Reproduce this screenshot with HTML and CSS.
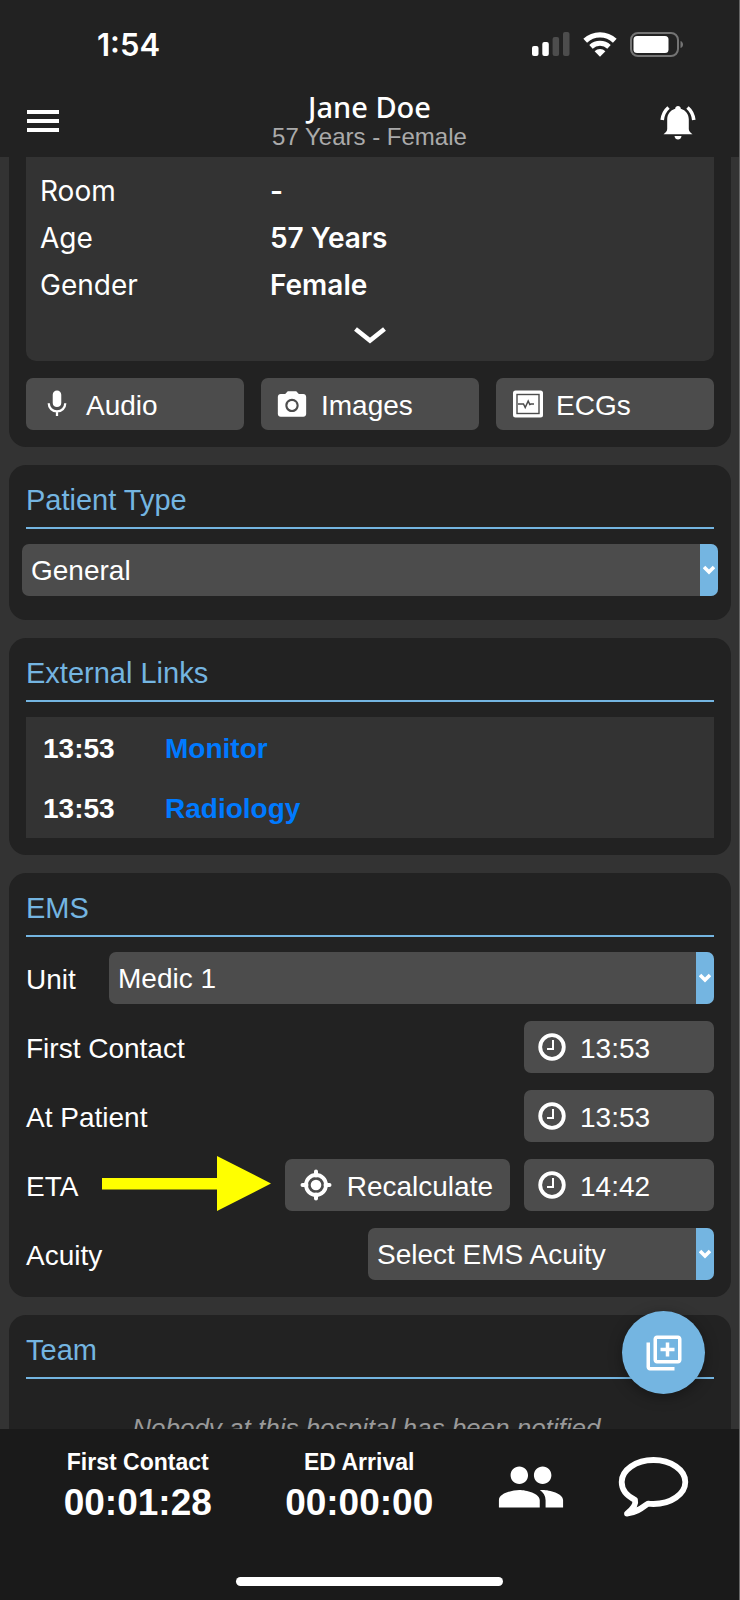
FILE: index.html
```html
<!DOCTYPE html>
<html lang="en">
<head>
    <meta charset="UTF-8">
    <meta name="viewport" content="width=device-width, initial-scale=1.0">
    <title>Jane Doe</title>
    <link rel="stylesheet" href="styles.css">
</head>
<body>
    <header class="header">
        <div class="status-bar">
            <span class="clock">1:54</span>
            <div class="status-icons">
                <svg width="38" height="24" viewBox="0 0 38 24">
                    <rect x="0" y="14" width="6.5" height="10" rx="2" fill="#fff"/>
                    <rect x="10.3" y="10" width="6.5" height="14" rx="2" fill="#fff"/>
                    <rect x="20.6" y="5" width="6.5" height="19" rx="2" fill="#4d4d4d"/>
                    <rect x="31" y="0" width="6.5" height="24" rx="2" fill="#4d4d4d"/>
                </svg>
                <svg width="34" height="25" viewBox="0 0 34 25">
                    <path d="M2.2 8.8a21.5 21.5 0 0 1 29.6 0" fill="none" stroke="#fff" stroke-width="5.4"/>
                    <path d="M8 14.8a13.2 13.2 0 0 1 18 0" fill="none" stroke="#fff" stroke-width="5"/>
                    <path d="M11.6 19.2a8 8 0 0 1 10.8 0L17 24.8z" fill="#fff"/>
                </svg>
                <svg width="54" height="25" viewBox="0 0 54 25">
                    <rect x="1" y="1" width="47" height="23" rx="7" fill="none" stroke="#747474" stroke-width="2"/>
                    <rect x="3.5" y="4" width="35" height="17" rx="3.5" fill="#fff"/>
                    <path d="M50.5 9c3.4 1 3.4 6 0 7z" fill="#747474"/>
                </svg>
            </div>
        </div>
        <div class="nav-bar">
            <button class="icon-btn" aria-label="Menu">
                <svg width="32" height="24" viewBox="0 0 32 24">
                    <path d="M0 3h32M0 12h32M0 21h32" stroke="#fff" stroke-width="4"/>
                </svg>
            </button>
            <div class="patient">
                <h1>Jane Doe</h1>
                <p>57 Years - Female</p>
            </div>
            <button class="icon-btn" aria-label="Alerts">
                <svg width="36" height="40" viewBox="0 -4 36 40" fill="#fff">
                    <path d="M18 1c1.600 0 2.700 1 2.800 2.700 5 1.400 8 5.600 8 10.800v9.500c0 2 1.500 3.500 3.700 5.300H3.500C5.700 27.500 7.200 26 7.200 24v-9.500c0-5.200 3-9.400 8-10.800C15.300 2 16.400 1 18 1z"/>
                    <path d="M14.500 31h7c-.3 2.400-1.700 3.500-3.500 3.500s-3.200-1.100-3.500-3.500z"/>
                    <path d="M8.500 2.500C5 5.500 2.800 9.500 2.200 15M27.500 2.500c3.500 3 5.700 7 6.300 12.500" fill="none" stroke="#fff" stroke-width="3.600"/>
                </svg>
            </button>
        </div>
    </header>

    <div class="content">
        <main class="scroll">
            <!-- Patient details -->
            <section class="card card-first">
                <div class="details">
                    <dl>
                        <dt>Room</dt>
                        <dd>-</dd>
                        <dt>Age</dt>
                        <dd>57 Years</dd>
                        <dt>Gender</dt>
                        <dd>Female</dd>
                    </dl>
                    <button class="expand" aria-label="Show more">
                        <svg width="32" height="18" viewBox="0 0 32 18">
                            <path d="M1.500 3L16 14.500 30.500 3" fill="none" stroke="#fff" stroke-width="4.600"/>
                        </svg>
                    </button>
                </div>
                <div class="media">
                    <button class="btn">
                        <svg width="34" height="32" viewBox="0 0 24 24" fill="#fff">
                            <path d="M12 14.300c1.800 0 3.200-1.300 3.200-3.100V5c0-1.700-1.400-3.100-3.200-3.100S8.800 3.300 8.800 5v6.200c0 1.800 1.400 3.100 3.200 3.100z"/>
                            <path d="M5.800 11.500c0 3.500 2.700 6 6.200 6s6.200-2.500 6.200-6M12 17v4" fill="none" stroke="#fff" stroke-width="1.700"/>
                        </svg>
                        Audio
                    </button>
                    <button class="btn">
                        <svg width="34" height="34" viewBox="0 0 24 24" fill="#fff">
                            <circle cx="12" cy="13" r="3.200"/>
                            <path d="M9 3L7.170 5H4c-1.100 0-2 .9-2 2v12c0 1.100.9 2 2 2h16c1.100 0 2-.9 2-2V7c0-1.100-.9-2-2-2h-3.170L15 3H9zm3 14.700c-2.600 0-4.700-2.100-4.700-4.700s2.100-4.700 4.700-4.700 4.700 2.100 4.700 4.700-2.100 4.700-4.700 4.700z"/>
                        </svg>
                        Images
                    </button>
                    <button class="btn">
                        <svg width="34" height="28" viewBox="0 0 34 28">
                            <rect x="3" y="0.500" width="30" height="27" rx="2.500" fill="#fff"/>
                            <rect x="7" y="4.500" width="22" height="19" fill="none" stroke="#4c4c4c" stroke-width="1.400"/>
                            <path d="M8 14h5.500l1.700 3.500 3-6.500 1.600 3.500 1.200-.5h3" fill="none" stroke="#4c4c4c" stroke-width="1.500"/>
                        </svg>
                        ECGs
                    </button>
                </div>
            </section>

            <!-- Patient type -->
            <section class="card card-type">
                <h2><label for="type">Patient Type</label></h2>
                <div class="select type-select">
                    <select id="type">
                        <option>General</option>
                    </select>
                    <span class="arrow">
                        <svg width="12" height="10" viewBox="0 0 12 10"><path d="M1 2l5 5 5-5" fill="none" stroke="#fff" stroke-width="3.600"/></svg>
                    </span>
                </div>
            </section>

            <!-- External links -->
            <section class="card">
                <h2>External Links</h2>
                <div class="links">
                    <table>
                        <tr>
                            <td class="time">13:53</td>
                            <td><a href="#">Monitor</a></td>
                        </tr>
                        <tr>
                            <td class="time">13:53</td>
                            <td><a href="#">Radiology</a></td>
                        </tr>
                    </table>
                </div>
            </section>

            <!-- EMS -->
            <section class="card">
                <h2>EMS</h2>
                <div class="rows">
                    <div class="row">
                        <label for="unit">Unit</label>
                        <div class="select wide">
                            <select id="unit">
                                <option>Medic 1</option>
                            </select>
                            <span class="arrow">
                                <svg width="12" height="10" viewBox="0 0 12 10"><path d="M1 2l5 5 5-5" fill="none" stroke="#fff" stroke-width="3.600"/></svg>
                            </span>
                        </div>
                    </div>
                    <div class="row">
                        <label for="contact">First Contact</label>
                        <button class="btn btn-time" id="contact">
                            <svg width="28" height="28" viewBox="0 0 28 28" fill="none" stroke="#fff">
                                <circle cx="14" cy="14" r="11.800" stroke-width="3.800"/>
                                <path d="M15 7v9H9" stroke-width="2"/>
                            </svg>
                            13:53
                        </button>
                    </div>
                    <div class="row">
                        <label for="patient">At Patient</label>
                        <button class="btn btn-time" id="patient">
                            <svg width="28" height="28" viewBox="0 0 28 28" fill="none" stroke="#fff">
                                <circle cx="14" cy="14" r="11.800" stroke-width="3.800"/>
                                <path d="M15 7v9H9" stroke-width="2"/>
                            </svg>
                            13:53
                        </button>
                    </div>
                    <div class="row">
                        <label for="eta">ETA</label>
                        <svg class="pointer" width="170" height="56" viewBox="0 0 170 56">
                            <path d="M0 22h115V0l54 27.500L115 55V33.500H0z" fill="#ffff00"/>
                        </svg>
                        <button class="btn btn-recalc">
                            <svg width="34" height="34" viewBox="0 0 34 34">
                                <circle cx="17" cy="17" r="10" fill="none" stroke="#fff" stroke-width="3.800"/>
                                <circle cx="17" cy="17" r="5.300" fill="#fff"/>
                                <path d="M17 3.500v4M17 26.500v4M3.500 17h4M26.500 17h4" stroke="#fff" stroke-width="4" stroke-linecap="round"/>
                            </svg>
                            Recalculate
                        </button>
                        <button class="btn btn-time" id="eta">
                            <svg width="28" height="28" viewBox="0 0 28 28" fill="none" stroke="#fff">
                                <circle cx="14" cy="14" r="11.800" stroke-width="3.800"/>
                                <path d="M15 7v9H9" stroke-width="2"/>
                            </svg>
                            14:42
                        </button>
                    </div>
                    <div class="row">
                        <label for="acuity">Acuity</label>
                        <div class="select half">
                            <select id="acuity">
                                <option>Select EMS Acuity</option>
                            </select>
                            <span class="arrow">
                                <svg width="12" height="10" viewBox="0 0 12 10"><path d="M1 2l5 5 5-5" fill="none" stroke="#fff" stroke-width="3.600"/></svg>
                            </span>
                        </div>
                    </div>
                </div>
            </section>

            <!-- Team -->
            <section class="card">
                <h2>Team</h2>
                <p class="empty">Nobody at this hospital has been notified.</p>
            </section>
        </main>
        <button class="fab" aria-label="Add">
            <svg width="42" height="42" viewBox="0 0 24 24" fill="#fff">
                <path d="M4 6H2v14c0 1.100.9 2 2 2h14v-2H4V6zm16-4H8c-1.100 0-2 .9-2 2v12c0 1.100.9 2 2 2h12c1.100 0 2-.9 2-2V4c0-1.100-.9-2-2-2zm0 14H8V4h12v12zm-7-2h2v-3h3V9h-3V6h-2v3h-3v2h3v3z"/>
            </svg>
        </button>
    </div>

    <footer class="footer">
        <div class="timers">
            <div class="timer">
                <span class="timer-label">First Contact</span>
                <span class="timer-value">00:01:28</span>
            </div>
            <div class="timer">
                <span class="timer-label">ED Arrival</span>
                <span class="timer-value">00:00:00</span>
            </div>
            <button class="icon-btn" aria-label="Team">
                <svg width="70" height="70" viewBox="0 0 24 24" fill="#fff">
                    <path d="M16 11c1.660 0 2.990-1.340 2.990-3S17.660 5 16 5s-3 1.340-3 3 1.340 3 3 3zm-8 0c1.660 0 2.990-1.340 2.990-3S9.660 5 8 5 5 6.340 5 8s1.340 3 3 3zm0 2c-2.330 0-7 1.170-7 3.500V19h14v-2.500c0-2.330-4.670-3.500-7-3.500zm8 0c-.29 0-.62.02-.97.05 1.160.84 1.970 1.970 1.970 3.450V19h6v-2.500c0-2.330-4.670-3.500-7-3.500z"/>
                </svg>
            </button>
            <button class="icon-btn" aria-label="Chat">
                <svg width="72" height="62" viewBox="0 0 72 62">
                    <path d="M30 47.600C24 52 18 57 9 57.500 15 53 18.500 49 17 43.800 8 39.500 3.700 33 3.700 26 3.700 14 18 4 35.500 4S67.300 14 67.300 26 53 48 35.500 48c-2 0-4-.1-5.500-.4z" fill="none" stroke="#fff" stroke-width="5.800" stroke-linejoin="round"/>
                </svg>
            </button>
        </div>
        <div class="home"></div>
    </footer>
</body>
</html>
```
FILE: styles.css
```css
* {
    box-sizing: border-box;
}

body {
    margin: 0;
    height: 100vh;
    display: flex;
    flex-direction: column;
    overflow: hidden;
    background-color: #333;
    border-right: 1px solid #666;
    color: #fff;
    font-family: "Liberation Sans", Arial, sans-serif;
    font-size: 28px;
}

button,
select {
    font: inherit;
    color: inherit;
    border: none;
    cursor: pointer;
}

h1, h2, p, dl, dd {
    margin: 0;
    font-weight: normal;
}

svg {
    display: block;
    flex: none;
}

/* Header */
.header {
    background-color: #222;
}

.status-bar {
    height: 88px;
    padding: 0 55px 0 97px;
    display: flex;
    align-items: center;
    justify-content: space-between;
}

.clock {
    font-family: Inter, sans-serif;
    font-size: 31px;
    font-weight: 600;
}

.status-icons {
    display: flex;
    gap: 13px;
}

.nav-bar {
    height: 69px;
    padding: 0 43px 4px 27px;
    display: grid;
    grid-template-columns: 1fr auto 1fr;
    align-items: center;
}

.icon-btn {
    display: flex;
    justify-content: center;
    padding: 0;
    background: none;
}

.nav-bar .icon-btn {
    justify-self: start;
}

.nav-bar .icon-btn:last-child {
    justify-self: end;
}

.patient {
    text-align: center;
    padding-left: 16px;
}

.patient h1 {
    font-family: "Noto Sans", sans-serif;
    font-size: 29px;
    font-weight: 500;
    line-height: 32px;
}

.patient p {
    color: #aaa;
    font-size: 24px;
    line-height: 28px;
}

/* Content */
.content {
    position: relative;
    flex: 1;
    min-height: 0;
}

.scroll {
    height: 100%;
    overflow: hidden;
    padding: 0 8px 0 9px;
    display: flex;
    flex-direction: column;
    gap: 18px;
}

.card {
    flex: none;
    background-color: #222;
    border-radius: 17px;
    padding: 17px;
}

.card-first {
    padding-top: 0;
    border-top-left-radius: 0;
    border-top-right-radius: 0;
}

.card-type {
    padding-bottom: 24px;
}

.card h2 {
    margin-bottom: 15px;
    padding-bottom: 9px;
    border-bottom: 2px solid #74b5e1;
    color: #74b5e1;
    font-size: 29px;
    line-height: 36px;
}

.details {
    padding-top: 11px;
    background-color: #333;
    border-radius: 0 0 10px 10px;
}

.details dl {
    padding: 0 14px;
    display: grid;
    grid-template-columns: 1fr 2fr;
    font-family: Inter, sans-serif;
    line-height: 47px;
}

.details dd {
    padding-left: 10px;
    font-weight: 600;
}

.expand {
    width: 100%;
    height: 52px;
    display: flex;
    justify-content: center;
    align-items: center;
    background: none;
}

.media {
    margin-top: 17px;
    display: grid;
    grid-template-columns: repeat(3, 1fr);
    gap: 17px;
}

.btn {
    height: 52px;
    padding: 3px 17px 0 14px;
    display: flex;
    align-items: center;
    gap: 14px;
    background-color: #4c4c4c;
    border-radius: 7px;
}

.btn svg {
    margin-top: -3px;
}

.media .btn {
    gap: 12px;
}

.btn-time {
    width: 190px;
}

/* Drop-downs */
.select {
    position: relative;
}

.select select {
    appearance: none;
    display: block;
    width: 100%;
    height: 52px;
    padding: 1px 27px 0 9px;
    background-color: #4c4c4c;
    border-radius: 7px;
}

.select .arrow {
    position: absolute;
    top: 0;
    right: 0;
    bottom: 0;
    width: 18px;
    display: flex;
    align-items: center;
    justify-content: center;
    background-color: #74b5e1;
    border-radius: 0 7px 7px 0;
    pointer-events: none;
}

.type-select {
    margin: 0 -4px;
}

.wide {
    flex: 1;
}

.half {
    width: 346px;
}

/* External links */
.links {
    padding-top: 1px;
    background-color: #333;
}

.links table {
    width: 100%;
    border-collapse: collapse;
    font-weight: bold;
    line-height: 58px;
}

.links td {
    padding: 2px 0 0;
}

.links .time {
    width: 139px;
    padding-left: 17px;
}

.links a {
    color: #007aff;
    text-decoration: none;
}

/* EMS */
.rows {
    display: flex;
    flex-direction: column;
    gap: 17px;
}

.row {
    position: relative;
    display: flex;
    align-items: center;
    gap: 14px;
}

.row label {
    min-width: 69px;
    margin-right: auto;
    padding-top: 3px;
}

.pointer {
    position: absolute;
    left: 76px;
    top: -3px;
}

.empty {
    padding-top: 10px;
    color: #999;
    font-size: 26px;
    font-style: italic;
    line-height: 48px;
    text-align: center;
}

.fab {
    position: absolute;
    right: 34px;
    bottom: 35px;
    width: 83px;
    height: 83px;
    display: flex;
    align-items: center;
    justify-content: center;
    background-color: #74b5e1;
    border-radius: 50%;
    box-shadow: 0 3px 14px rgba(0, 0, 0, 0.35);
}

/* Footer */
.footer {
    height: 171px;
    padding: 19px 0 14px;
    display: flex;
    flex-direction: column;
    align-items: center;
    justify-content: space-between;
    background-color: #1a1a1a;
    font-weight: bold;
}

.timers {
    width: 100%;
    padding: 0 23px 0 27px;
    display: grid;
    grid-template-columns: 9fr 9fr 5fr 5fr;
    align-items: center;
}

.timer {
    display: flex;
    flex-direction: column;
    align-items: center;
    gap: 4px;
}

.timer-label {
    font-size: 23px;
    line-height: 28px;
}

.timer-value {
    font-size: 37px;
    line-height: 46px;
}

.home {
    width: 36%;
    height: 9px;
    background-color: #fff;
    border-radius: 5px;
}
```
